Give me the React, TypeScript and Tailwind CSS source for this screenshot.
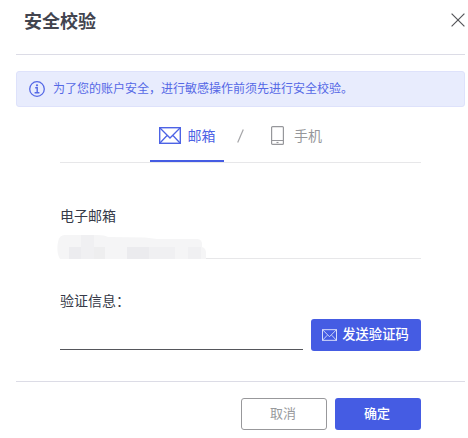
import React, { useState } from 'react';

type Tab = 'email' | 'phone';

interface IconProps {
  className?: string;
}

function MailIcon({ className }: IconProps) {
  return (
    <svg viewBox="0 0 22 17" fill="none" stroke="currentColor" className={className}>
      <rect x="0.7" y="0.7" width="20.6" height="15.6" strokeWidth="1.4" />
      <path d="M1 1l10 10L21 1M1 16l6.8-7.2M21 16l-6.8-7.2" strokeWidth="1.3" />
    </svg>
  );
}

function PhoneIcon({ className }: IconProps) {
  return (
    <svg viewBox="0 0 13 19" fill="none" stroke="currentColor" className={className}>
      <rect x="0.6" y="0.6" width="11.8" height="17.8" rx="1" strokeWidth="1.2" />
      <path d="M1 14.5h11" strokeWidth="1" />
      <path d="M5.5 16.5h2" strokeWidth="1.2" />
    </svg>
  );
}

function InfoIcon({ className }: IconProps) {
  return (
    <svg viewBox="0 0 16 16" fill="none" stroke="currentColor" className={className}>
      <circle cx="8" cy="8" r="7.3" strokeWidth="1.3" />
      <path d="M6.2 6.8h2v5M5.6 11.7h4.8" strokeWidth="1.4" />
      <circle cx="8" cy="4.3" r="1.1" fill="currentColor" stroke="none" />
    </svg>
  );
}

function CloseIcon({ className }: IconProps) {
  return (
    <svg viewBox="0 0 14 14" fill="none" stroke="currentColor" className={className}>
      <path d="M0.6 0.6l12.8 12.8M13.4 0.6L0.6 13.4" strokeWidth="1.2" />
    </svg>
  );
}

// Pixelated strip that hides the account's address
function MaskedEmail() {
  return (
    <svg viewBox="0 0 149 24" className="-ml-[3px] h-6 w-[149px] shrink-0">
      <path d="M3 24C0 19 0 12 1 7Q2 0 8 0H40Q48 0 51 2L88 2.5L100 4H140Q144 4 145 8V12Q149 13 149 18V24Z" fill="#f5f5f6" />
      <path d="M24 0h13v12H24zM91 12h27v12H91zM131 12h13v12h-13zM24 12h13v12H24z" fill="#f0f0f2" />
      <path d="M12 12h12v12H12z" fill="#ececef" />
      <path d="M37 12h11v12H37z" fill="#eeeeef" />
      <path d="M70 12h22v12H70z" fill="#ebebee" />
    </svg>
  );
}

function App() {
  const [activeTab, setActiveTab] = useState<Tab>('email');
  const [code, setCode] = useState<string>('');

  return (
    <div className="h-[438px] w-[468px] overflow-hidden bg-white pl-4 pr-[3px] font-['Liberation_Sans','Noto_Sans_CJK_SC',sans-serif] text-sm text-[#363a48]">
      {/* Header */}
      <header className="flex h-[55px] items-start justify-between border-b border-[#dcdce6] pl-2">
        <h1 className="mt-2 text-lg leading-7 font-bold text-[#42444f]">安全校验</h1>
        <button aria-label="关闭" className="mt-[13px] text-[#55565a]">
          <CloseIcon className="h-3.5 w-3.5" />
        </button>
      </header>

      {/* Notice */}
      <div className="mt-4 flex h-9 items-center rounded-[3px] border border-[#dee2fb] bg-[#e8ecfd] pl-3 text-[#5568e6]">
        <InfoIcon className="h-4 w-4" />
        <p className="ml-2 text-xs leading-5">为了您的账户安全，进行敏感操作前须先进行安全校验。</p>
      </div>

      <main className="ml-11 w-[361px]">
        {/* Tabs */}
        <nav className="flex h-14 border-b border-[#e7e7e9] pl-[90px]">
          <button
            onClick={() => setActiveTab('email')}
            className={`flex w-[74px] shrink-0 justify-center border-b-2 pt-[19px] ${
              activeTab === 'email' ? 'border-[#455ce3] text-[#4d63e5]' : 'border-transparent text-[#96979b]'
            }`}
          >
            <MailIcon className="mt-px h-[17px] w-[22px]" />
            <span className="ml-[7px] leading-5">邮箱</span>
          </button>
          <svg viewBox="0 0 7 14" fill="none" stroke="#a5a5a8" className="mt-[22px] ml-[13px] h-3.5 w-[7px] shrink-0">
            <path d="M6.3 0.5L0.7 13.5" strokeWidth="1.2" />
          </svg>
          <button
            onClick={() => setActiveTab('phone')}
            className={`flex shrink-0 border-b-2 pt-[19px] pl-[27px] ${
              activeTab === 'phone' ? 'border-[#455ce3] text-[#4d63e5]' : 'border-transparent text-[#96979b]'
            }`}
          >
            <PhoneIcon className="h-[19px] w-[13px]" />
            <span className="ml-2.5 leading-5">手机</span>
          </button>
        </nav>

        {/* Bound email */}
        <div className="mt-[43px]">
          <p className="leading-5">电子邮箱</p>
          <div className="mt-[9px] flex items-end">
            <MaskedEmail />
            <span className="flex-1 border-b border-[#e7e7e9]" />
          </div>
        </div>

        {/* Verification code */}
        <div className="mt-8">
          <label htmlFor="code" className="block leading-5">验证信息：</label>
          <div className="mt-2 flex items-end justify-between">
            <input
              id="code"
              value={code}
              onChange={(e) => setCode(e.target.value)}
              className="mb-px h-[30px] w-[243px] border-b border-[#55565b] outline-none"
            />
            <button className="flex h-8 w-[110px] items-center justify-center rounded-[3px] bg-[#455ce3] pr-px text-[13.3px] font-medium text-white">
              <MailIcon className="h-3 w-[15px] text-[#dfe3fb]" />
              <span className="ml-[5px]">发送验证码</span>
            </button>
          </div>
        </div>
      </main>

      {/* Footer */}
      <footer className="mt-[30px] flex justify-end gap-2 border-t border-[#dcdce6] pt-4 pr-11">
        <button className="h-8 w-[86px] rounded-[3px] border border-[#98989b] pr-0.5 text-[13px] text-[#98999c]">取消</button>
        <button className="h-8 w-[86px] rounded-[3px] bg-[#455ce3] pr-0.5 text-[13px] font-medium text-white">确定</button>
      </footer>
    </div>
  );
}

export default App;
